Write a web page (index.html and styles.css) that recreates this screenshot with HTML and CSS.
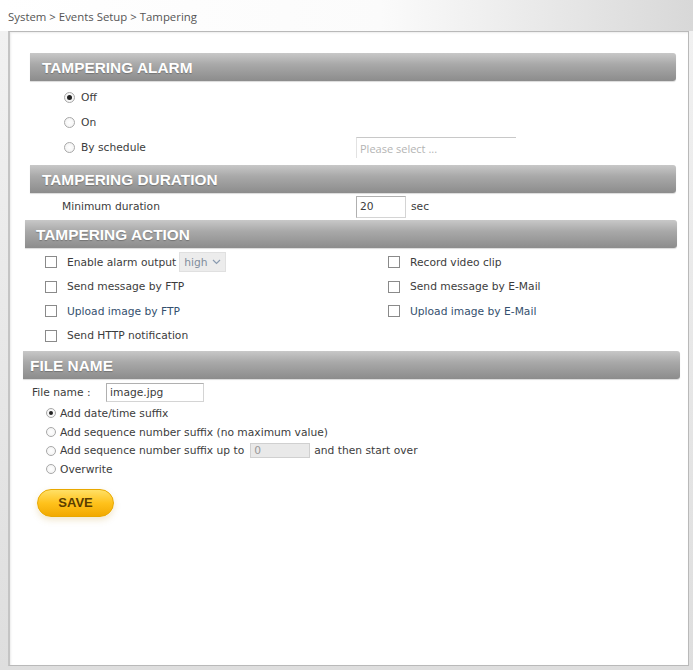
FILE: index.html
```html
<!DOCTYPE html>
<html lang="en">

<head>
  <meta charset="UTF-8">
  <meta name="viewport" content="width=device-width, initial-scale=1.0">
  <title>Tampering</title>
  <link rel="stylesheet" href="styles.css">
</head>

<body>
  <div class="crumb">System &gt; Events Setup &gt; Tampering</div>

  <div class="panel">
    <!-- 알람 -->
    <h2 class="bar bar-alarm">TAMPERING ALARM</h2>
    <div class="alarmList">
      <div class="alarmRow"><span class="radio on"></span><span>Off</span></div>
      <div class="alarmRow"><span class="radio"></span><span>On</span></div>
      <div class="alarmRow">
        <span class="alarmLabel"><span class="radio"></span><span>By schedule</span></span>
        <span class="schedule">Please select ...</span>
      </div>
    </div>

    <!-- 지속 시간 -->
    <h2 class="bar bar-duration">TAMPERING DURATION</h2>
    <div class="durationRow">
      <span class="durationLabel">Minimum duration</span>
      <span class="field durationField">20</span>
      <span>sec</span>
    </div>

    <!-- 동작 -->
    <h2 class="bar bar-action">TAMPERING ACTION</h2>
    <div class="actionGrid">
      <div class="check"><span class="box"></span><span>Enable alarm output</span><span class="select">high <svg width="9" height="6" viewBox="0 0 9 6"><path d="M1 1l3.5 3.5L8 1" fill="none" stroke="#8a9bb0" stroke-width="1.2"/></svg></span></div>
      <div class="check"><span class="box"></span><span>Record video clip</span></div>
      <div class="check"><span class="box"></span><span>Send message by FTP</span></div>
      <div class="check"><span class="box"></span><span>Send message by E-Mail</span></div>
      <div class="check"><span class="box"></span><span class="blue">Upload image by FTP</span></div>
      <div class="check"><span class="box"></span><span class="blue">Upload image by E-Mail</span></div>
      <div class="check"><span class="box"></span><span>Send HTTP notification</span></div>
    </div>

    <!-- 파일 이름 -->
    <h2 class="bar bar-file">FILE NAME</h2>
    <div class="fileRow">
      <span class="fileLabel">File name :</span>
      <span class="field fileField">image.jpg</span>
    </div>
    <div class="suffixList">
      <div class="suffixRow"><span class="radio small on"></span><span>Add date/time suffix</span></div>
      <div class="suffixRow"><span class="radio small"></span><span>Add sequence number suffix (no maximum value)</span></div>
      <div class="suffixRow"><span class="radio small"></span><span>Add sequence number suffix up to</span><span class="field zeroField">0</span><span>and then start over</span></div>
      <div class="suffixRow"><span class="radio small"></span><span>Overwrite</span></div>
    </div>

    <button class="save">SAVE</button>
  </div>
</body>

</html>
```

FILE: styles.css
```css
body {
  margin: 0;
  height: 670px;
  overflow: hidden;
  background: linear-gradient(180deg, #f2f2f2 0%, #dedede 100%);
  font-family: "DejaVu Sans", sans-serif;
  font-size: 10.7px;
  color: #3c3c3c;
}

.crumb {
  height: 31px;
  box-sizing: border-box;
  padding: 9px 0 0 8px;
  font-family: "Open Sans", sans-serif;
  font-size: 11.4px;
  color: #555;
  background: linear-gradient(90deg, #ffffff 0%, #fbfbfb 55%, #d8d8d8 100%);
}

.panel {
  margin-left: 8px;
  width: 681px;
  height: 635px;
  box-sizing: border-box;
  padding-top: 21px;
  background-color: #fff;
  border: 1px solid #b9b9b9;
  border-left: 2px solid #c4c4c4;
  box-shadow: inset 1px 1px 2px rgba(0, 0, 0, .08);
}

/* 섹션 제목 막대 */
.bar {
  margin: 0;
  height: 28px;
  line-height: 29px;
  padding-left: 12px;
  font-family: "Liberation Sans", Arial, sans-serif;
  font-size: 15.4px;
  font-weight: bold;
  color: #fff;
  text-shadow: 0 1px 1px rgba(0, 0, 0, .25);
  background: linear-gradient(180deg, #c8c8c8 0%, #a9a9a9 40%, #8c8c8c 100%);
  border-radius: 0 3px 3px 0;
  box-shadow: 0 1px 1px rgba(0, 0, 0, .15);
}

.bar-alarm {
  margin-left: 20px;
  margin-right: 12px;
}

.bar-duration {
  margin-left: 20px;
  margin-right: 12px;
}

.bar-action {
  margin-left: 15px;
  margin-right: 11px;
  padding-left: 11px;
}

.bar-file {
  margin-left: 13px;
  margin-right: 8px;
  padding-left: 7px;
}

/* 라디오 */
.radio {
  display: inline-block;
  flex: none;
  width: 11px;
  height: 11px;
  border: 1px solid #a8a8a8;
  border-radius: 50%;
  background: radial-gradient(circle, #fff 0%, #f0f0f0 100%);
  box-sizing: border-box;
  position: relative;
}

.radio.on::after {
  content: "";
  position: absolute;
  left: 2px;
  top: 2px;
  width: 5px;
  height: 5px;
  border-radius: 50%;
  background-color: #222;
}

.radio.small {
  width: 10px;
  height: 10px;
}

.radio.small.on::after {
  width: 4px;
  height: 4px;
}

.alarmList {
  padding: 4px 0 5px 54px;
}

.alarmRow {
  display: flex;
  align-items: center;
  height: 25px;
  gap: 6px;
}

.alarmLabel {
  display: flex;
  align-items: center;
  gap: 6px;
  width: 286px;
}

.schedule {
  width: 160px;
  height: 21px;
  line-height: 21px;
  box-sizing: border-box;
  padding-left: 3px;
  font-family: "Open Sans", sans-serif;
  font-size: 11px;
  color: #b4b4b4;
  border-top: 1px solid #c8c8c8;
  border-left: 1px solid #e2e2e2;
}

/* 지속 시간 */
.durationRow {
  display: flex;
  align-items: center;
  height: 27px;
  padding-left: 52px;
}

.durationLabel {
  width: 294px;
}

.field {
  display: inline-block;
  box-sizing: border-box;
  border: 1px solid #b0b0b0;
  border-right-color: #d4d4d4;
  border-bottom-color: #d4d4d4;
  padding-left: 3px;
  background-color: #fff;
}

.durationField {
  width: 50px;
  height: 22px;
  line-height: 20px;
  margin-right: 5px;
}

/* 동작 체크박스 */
.actionGrid {
  display: grid;
  grid-template-columns: 343px auto;
  grid-auto-rows: 24.5px;
  padding: 2px 0 3px 35px;
}

.check {
  display: flex;
  align-items: center;
  gap: 10px;
}

.box {
  flex: none;
  width: 12px;
  height: 12px;
  box-sizing: border-box;
  border: 1px solid #8a8a8a;
  background-color: #fff;
}

.blue {
  color: #34506e;
}

.select {
  display: inline-flex;
  align-items: center;
  gap: 5px;
  margin-left: -7px;
  height: 18px;
  padding: 0 4px;
  color: #7f8c9c;
  background-color: #ececec;
  border: 1px solid #e0e0e0;
}

/* 파일 이름 */
.fileRow {
  display: flex;
  align-items: center;
  height: 23px;
  padding: 2px 0 0 22px;
}

.fileLabel {
  width: 74px;
}

.fileField {
  width: 98px;
  height: 19px;
  line-height: 17px;
}

.suffixList {
  padding: 0 0 0 36px;
}

.suffixRow {
  display: flex;
  align-items: center;
  gap: 4px;
  height: 18.7px;
}

.zeroField {
  width: 60px;
  height: 15px;
  line-height: 13px;
  margin: 0 0 0 2px;
  color: #999;
  background-color: #e9e9e9;
  border-color: #d0d0d0;
}

/* 저장 버튼 */
.save {
  display: block;
  margin: 10px 0 0 27px;
  width: 77px;
  height: 28px;
  padding: 0;
  border: 1px solid #e8a800;
  border-radius: 14px;
  font-family: "Liberation Sans", Arial, sans-serif;
  font-size: 13px;
  font-weight: bold;
  color: #5a3d00;
  background: linear-gradient(180deg, #ffe066 0%, #ffc21c 50%, #f2a900 100%);
  box-shadow: 0 3px 6px rgba(200, 160, 60, .25);
  cursor: pointer;
}
```
